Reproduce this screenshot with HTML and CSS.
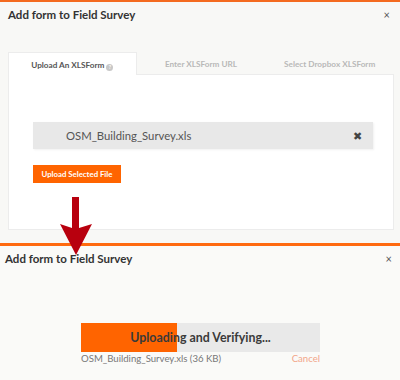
FILE: index.html
```html
<!DOCTYPE html>
<html lang="en">
<head>
  <meta charset="UTF-8">
  <title>Add form to Field Survey</title>
  <link rel="stylesheet" href="styles.css">
</head>
<body>
  <div class="modal modal-top">
    <div class="modal-header">
      <h3>Add form to Field Survey</h3>
      <span class="close">&times;</span>
    </div>
    <div class="tabs">
      <div class="tab active">Upload An XLSForm <span class="help">?</span></div>
      <div class="tab">Enter XLSForm URL</div>
      <div class="tab">Select Dropbox XLSForm</div>
    </div>
    <div class="tab-panel">
      <div class="file-row">
        <span class="file-name">OSM_Building_Survey.xls</span>
        <span class="file-remove">&#x2716;</span>
      </div>
      <button class="upload-btn">Upload Selected File</button>
    </div>
  </div>

  <div class="modal modal-bottom">
    <div class="modal-header">
      <h3>Add form to Field Survey</h3>
      <span class="close">&times;</span>
    </div>
    <div class="progress-wrap">
      <div class="progress">
        <div class="progress-fill" style="width: 40%"></div>
        <span class="progress-label">Uploading and Verifying...</span>
      </div>
      <div class="progress-info">
        <span>OSM_Building_Survey.xls (36 KB)</span>
        <a class="cancel">Cancel</a>
      </div>
    </div>
  </div>

  <svg class="arrow" width="32" height="58" viewBox="0 0 32 58">
    <polygon points="12,0 19,0 19,31 32,27 16,58 0,27 12,31" fill="#b8000e"/>
  </svg>
</body>
</html>
```

FILE: styles.css
```css
body {
  font-family: 'Lato', 'Open Sans', sans-serif;
  margin: 0;
  padding: 0;
  width: 400px;
  height: 380px;
  overflow: hidden;
  position: relative;
  background: #f9f9f7;
}
.modal {
  background: #f8f8f6;
  box-sizing: border-box;
}
.modal-top {
  border-top: 2px solid #f46a1f;
  height: 243px;
  padding: 0 6px 0 8px;
}
.modal-bottom {
  border-top: 3px solid #ff6a10;
  height: 137px;
  padding: 0 6px 0 5px;
  background: #fafaf8;
}
.modal-header {
  display: flex;
  justify-content: space-between;
  align-items: center;
  height: 24px;
}
.modal-header h3 {
  margin: 0;
  font-size: 11.5px;
  font-weight: 700;
  color: #333;
}
.close {
  font-size: 11px;
  color: #555;
  margin-right: 4px;
}
.modal-bottom .close {
  margin-right: 2px;
}
.tabs {
  display: grid;
  grid-template-columns: repeat(3, 1fr);
  margin-top: 26px;
  width: 386px;
}
.tab {
  height: 23px;
  line-height: 25px;
  text-align: center;
  font-size: 8.2px;
  font-weight: 700;
  color: #b8b8b8;
  border-bottom: 1px solid #ececec;
  box-sizing: border-box;
}
.tab.active {
  background: #fff;
  color: #555;
  border: 1px solid #ececec;
  border-bottom: none;
}
.help {
  display: inline-block;
  width: 7px;
  height: 7px;
  line-height: 7px;
  border-radius: 50%;
  background: #c8c8c8;
  color: #fff;
  font-size: 5px;
  vertical-align: -1px;
}
.tab-panel {
  background: #fff;
  width: 386px;
  height: 155px;
  box-sizing: border-box;
  border: 1px solid #ececec;
  border-top: none;
  padding: 47px 0 0 24px;
}
.file-row {
  display: flex;
  justify-content: space-between;
  align-items: center;
  width: 340px;
  height: 27px;
  background: #e8e8e8;
  box-shadow: 1px 1px 2px rgba(0, 0, 0, 0.06);
  padding: 0 11px 0 33px;
  box-sizing: border-box;
}
.file-name {
  font-size: 11.3px;
  color: #555;
}
.file-remove {
  font-size: 11px;
  color: #444;
}
.upload-btn {
  display: block;
  margin-top: 16px;
  width: 88px;
  height: 18px;
  padding: 0;
  border: none;
  background: #ff6400;
  color: #fff;
  font-family: inherit;
  font-size: 7.8px;
  font-weight: 700;
}
.progress-wrap {
  width: 239px;
  margin: 53px 0 0 76px;
}
.progress {
  position: relative;
  height: 29px;
  background: #e9e9e9;
  display: flex;
  align-items: center;
  justify-content: center;
}
.progress-fill {
  position: absolute;
  left: 0;
  top: 0;
  bottom: 0;
  background: #ff6400;
}
.progress-label {
  position: relative;
  font-size: 12.4px;
  font-weight: 700;
  color: #3a3a3a;
}
.progress-info {
  display: flex;
  justify-content: space-between;
  margin-top: 1px;
  font-size: 9.6px;
  color: #777;
}
.cancel {
  color: #f2a58a;
}
.arrow {
  position: absolute;
  left: 60px;
  top: 197px;
}
```
